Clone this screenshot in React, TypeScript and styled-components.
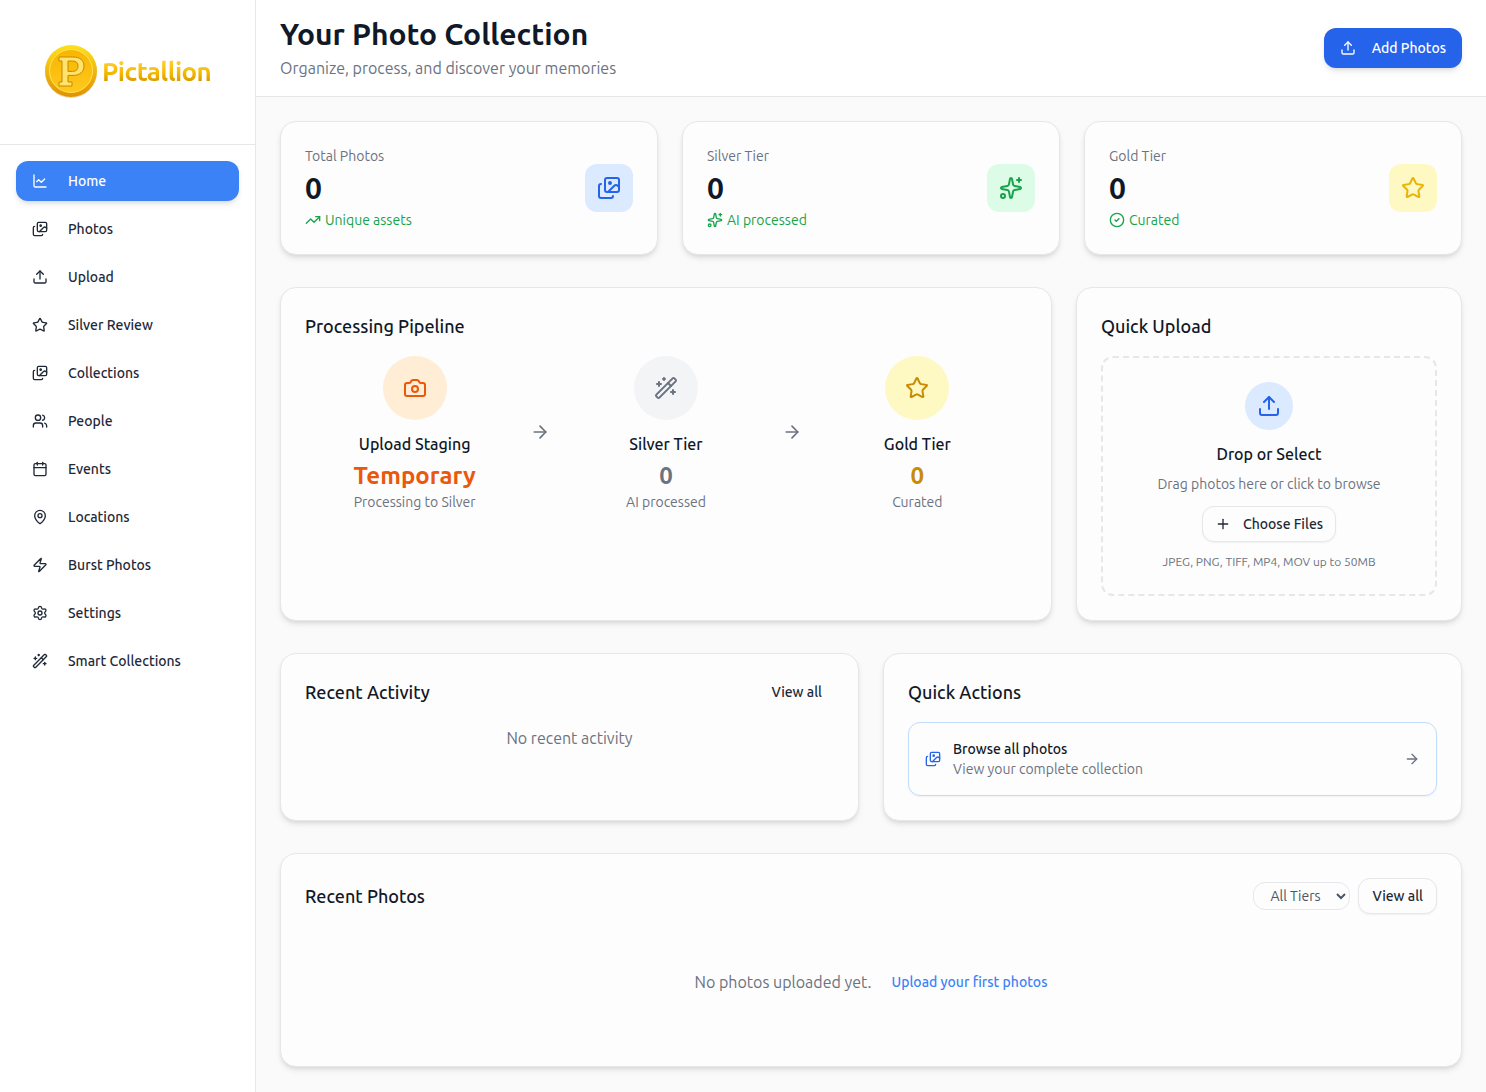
import { FC, ReactNode } from 'react';
import styled, { createGlobalStyle } from 'styled-components';
import {
  ArrowRight,
  Calendar,
  Camera,
  ChartLine,
  CircleCheck,
  Images,
  MapPin,
  Plus,
  Settings,
  Sparkles,
  Star,
  TrendingUp,
  Upload,
  Users,
  WandSparkles,
  Zap,
} from 'lucide-react';

const GlobalStyle = createGlobalStyle`
  * {
    box-sizing: border-box;
  }
  html, body {
    margin: 0;
    padding: 0;
    background: #fafafa;
    color: #111827;
    font-family: Ubuntu, "Noto Sans", sans-serif;
  }
`;

const Layout = styled.div`
  display: flex;
  height: 1092px;
  overflow: hidden;
`;

const Sidebar = styled.aside`
  width: 256px;
  flex-shrink: 0;
  background: #fff;
  border-right: 1px solid #e5e7eb;
`;

const LogoBox = styled.div`
  height: 145px;
  display: flex;
  align-items: center;
  padding: 0 0 2px 43px;
  gap: 3px;
  border-bottom: 1px solid #e5e7eb;
`;

const LogoText = styled.span`
  font-size: 26px;
  font-weight: 700;
  letter-spacing: -0.6px;
  background: linear-gradient(180deg, #ffd84a 0%, #f5b800 55%, #c98a00 100%);
  -webkit-background-clip: text;
  background-clip: text;
  color: transparent;
`;

const Nav = styled.nav`
  display: flex;
  flex-direction: column;
  gap: 8px;
  padding: 16px;
`;

const NavItem = styled.a<{ $active?: boolean }>`
  height: 40px;
  display: flex;
  align-items: center;
  gap: 20px;
  padding: 0 16px;
  border-radius: 12px;
  font-size: 14px;
  font-weight: 500;
  color: ${(p) => (p.$active ? '#fff' : '#1f2937')};
  background: ${(p) => (p.$active ? '#3b82f6' : 'transparent')};
  box-shadow: ${(p) =>
    p.$active ? '0 4px 6px -1px rgba(0,0,0,.1), 0 2px 4px -2px rgba(0,0,0,.1)' : 'none'};
`;

const Main = styled.main`
  flex: 1;
  min-width: 0;
`;

const Header = styled.header`
  height: 97px;
  background: #fff;
  border-bottom: 1px solid #e5e7eb;
  display: flex;
  align-items: center;
  justify-content: space-between;
  padding: 0 24px;
`;

const PageTitle = styled.h1`
  margin: 0;
  font-size: 30px;
  line-height: 36px;
  font-weight: 700;
  color: #111827;
`;

const PageSubtitle = styled.p`
  margin: 4px 0 0;
  font-size: 16px;
  line-height: 24px;
  color: #6b7280;
`;

const AddButton = styled.button`
  height: 40px;
  display: flex;
  align-items: center;
  gap: 16px;
  padding: 0 16px;
  border: 0;
  border-radius: 12px;
  background: #2563eb;
  color: #fff;
  font: 500 14px Ubuntu, "Noto Sans", sans-serif;
  box-shadow: 0 4px 6px -1px rgba(0, 0, 0, 0.1), 0 2px 4px -2px rgba(0, 0, 0, 0.1);
`;

const Content = styled.div`
  padding: 24px;
  display: flex;
  flex-direction: column;
  gap: 32px;
`;

const Row = styled.div<{ $cols: string }>`
  display: grid;
  grid-template-columns: ${(p) => p.$cols};
  gap: 24px;
`;

const Card = styled.section<{ $height: number }>`
  height: ${(p) => p.$height}px;
  padding: 24px;
  background: #fdfdfd;
  border: 1px solid #e5e7eb;
  border-radius: 16px;
  box-shadow: 0 4px 6px -1px rgba(0, 0, 0, 0.1), 0 2px 4px -2px rgba(0, 0, 0, 0.1);
`;

const StatCard = styled(Card)`
  display: flex;
  align-items: center;
  justify-content: space-between;
`;

const StatLabel = styled.div`
  font-size: 14px;
  line-height: 20px;
  color: #6b7280;
`;

const StatValue = styled.div`
  margin-top: 4px;
  font-size: 30px;
  line-height: 36px;
  font-weight: 700;
  color: #111827;
`;

const StatNote = styled.div`
  margin-top: 4px;
  display: flex;
  align-items: center;
  gap: 4px;
  font-size: 14px;
  line-height: 20px;
  color: #16a34a;
`;

const StatIcon = styled.div<{ $bg: string; $color: string }>`
  width: 48px;
  height: 48px;
  border-radius: 12px;
  display: flex;
  align-items: center;
  justify-content: center;
  background: ${(p) => p.$bg};
  color: ${(p) => p.$color};
`;

const CardTitle = styled.h2`
  margin: 0;
  font-size: 18px;
  line-height: 28px;
  font-weight: 500;
  color: #111827;
`;

const Pipeline = styled.div`
  margin-top: 16px;
  display: grid;
  grid-template-columns: 1fr 1fr 1fr;
  column-gap: 32px;
  padding: 0;
`;

const Stage = styled.div`
  position: relative;
  display: flex;
  flex-direction: column;
  align-items: center;
`;

const StageCircle = styled.div<{ $bg: string; $color: string }>`
  width: 64px;
  height: 64px;
  border-radius: 50%;
  display: flex;
  align-items: center;
  justify-content: center;
  background: ${(p) => p.$bg};
  color: ${(p) => p.$color};
`;

const StageName = styled.div`
  margin-top: 12px;
  font-size: 16px;
  line-height: 24px;
  font-weight: 500;
  color: #111827;
`;

const StageValue = styled.div<{ $color: string }>`
  margin-top: 4px;
  font-size: 24px;
  line-height: 32px;
  font-weight: 700;
  color: ${(p) => p.$color};
`;

const StageNote = styled.div`
  font-size: 14px;
  line-height: 20px;
  color: #6b7280;
`;

const StageArrow = styled.div`
  position: absolute;
  top: 66px;
  right: -32px;
  width: 32px;
  display: flex;
  justify-content: center;
  color: #6b7280;
`;

const DropZone = styled.div`
  margin-top: 16px;
  height: 240px;
  border: 2px dashed #e5e7eb;
  border-radius: 12px;
  display: flex;
  flex-direction: column;
  align-items: center;
  padding-top: 24px;
`;

const DropCircle = styled.div`
  width: 48px;
  height: 48px;
  border-radius: 50%;
  display: flex;
  align-items: center;
  justify-content: center;
  background: #dbeafe;
  color: #2563eb;
`;

const DropTitle = styled.div`
  margin-top: 12px;
  font-size: 16px;
  line-height: 24px;
  font-weight: 500;
  color: #111827;
`;

const DropHint = styled.div`
  margin-top: 8px;
  font-size: 14px;
  line-height: 20px;
  color: #6b7280;
`;

const OutlineButton = styled.button`
  display: flex;
  align-items: center;
  height: 36px;
  border: 1px solid #e5e7eb;
  border-radius: 12px;
  background: #fdfdfd;
  color: #1f2937;
  font: 500 14px Ubuntu, "Noto Sans", sans-serif;
  box-shadow: 0 1px 2px rgba(0, 0, 0, 0.05);
`;

const ChooseButton = styled(OutlineButton)`
  margin-top: 12px;
  gap: 12px;
  padding: 0 12px;
`;

const DropFormats = styled.div`
  margin-top: 12px;
  font-size: 12px;
  line-height: 16px;
  color: #6b7280;
`;

const CardHead = styled.div`
  display: flex;
  align-items: center;
  justify-content: space-between;
`;

const GhostLink = styled.span`
  padding: 0 12px;
  font-size: 14px;
  font-weight: 500;
  color: #1f2937;
`;

const EmptyNote = styled.div`
  margin-top: 20px;
  text-align: center;
  font-size: 16px;
  line-height: 24px;
  color: #6b7280;
`;

const ActionRow = styled.div`
  margin-top: 16px;
  height: 74px;
  display: flex;
  align-items: center;
  gap: 12px;
  padding: 0 16px;
  border: 1px solid #bfdbfe;
  border-radius: 12px;
  box-shadow: 0 1px 2px rgba(0, 0, 0, 0.05);
`;

const ActionText = styled.div`
  flex: 1;
`;

const ActionTitle = styled.div`
  font-size: 14px;
  line-height: 20px;
  font-weight: 500;
  color: #111827;
`;

const ActionNote = styled.div`
  font-size: 14px;
  line-height: 20px;
  color: #6b7280;
`;

const HeadControls = styled.div`
  display: flex;
  align-items: center;
  gap: 8px;
`;

const TierSelect = styled.select`
  height: 28px;
  padding: 0 0 0 12px;
  width: 97px;
  border: 1px solid #e5e7eb;
  border-radius: 12px;
  background: #fdfdfd;
  color: #4b5563;
  font: 14px Ubuntu, "Noto Sans", sans-serif;
`;

const ViewAllButton = styled(OutlineButton)`
  padding: 0 13px;
`;

const EmptyPhotos = styled.div`
  height: 120px;
  margin-top: 8px;
  display: flex;
  align-items: center;
  justify-content: center;
  gap: 20px;
  font-size: 16px;
  color: #6b7280;
`;

const UploadLink = styled.a`
  font-size: 14px;
  font-weight: 500;
  color: #3b82f6;
`;

const CoinLogo: FC = () => (
  <svg width="56" height="56" viewBox="0 0 56 56">
    <defs>
      <linearGradient id="coinEdge" x1="0" y1="0" x2="0" y2="1">
        <stop offset="0" stopColor="#ffe01a" />
        <stop offset="1" stopColor="#e09200" />
      </linearGradient>
      <linearGradient id="coinFace" x1="0" y1="0" x2="0" y2="1">
        <stop offset="0" stopColor="#f7b500" />
        <stop offset="1" stopColor="#ffc91f" />
      </linearGradient>
    </defs>
    <circle cx="28" cy="29" r="26" fill="#a8700a" opacity="0.25" />
    <circle cx="28" cy="28" r="26" fill="url(#coinEdge)" />
    <circle cx="28" cy="28" r="21.5" fill="url(#coinFace)" stroke="#ffe25a" strokeWidth="1" />
    <path
      d="M16 14h14c7 0 11 3.4 11 9s-4 9.400-11 9.400h-5v6.600h4v4H16v-4h3V18h-3z M25 18v10.400h4.500c3.800 0 5.500-1.900 5.500-5.200S33.300 18 29.500 18z"
      fill="#ffe36a"
      fillRule="evenodd"
      stroke="#c98500"
      strokeWidth="1"
    />
  </svg>
);

const navItems: { label: string; icon: ReactNode; active?: boolean }[] = [
  { label: 'Home', icon: <ChartLine size={16} />, active: true },
  { label: 'Photos', icon: <Images size={16} /> },
  { label: 'Upload', icon: <Upload size={16} /> },
  { label: 'Silver Review', icon: <Star size={16} /> },
  { label: 'Collections', icon: <Images size={16} /> },
  { label: 'People', icon: <Users size={16} /> },
  { label: 'Events', icon: <Calendar size={16} /> },
  { label: 'Locations', icon: <MapPin size={16} /> },
  { label: 'Burst Photos', icon: <Zap size={16} /> },
  { label: 'Settings', icon: <Settings size={16} /> },
  { label: 'Smart Collections', icon: <WandSparkles size={16} /> },
];

const stats = [
  {
    label: 'Total Photos',
    note: 'Unique assets',
    noteIcon: <TrendingUp size={16} />,
    icon: <Images size={24} />,
    bg: '#dbeafe',
    color: '#2563eb',
  },
  {
    label: 'Silver Tier',
    note: 'AI processed',
    noteIcon: <Sparkles size={16} />,
    icon: <Sparkles size={24} />,
    bg: '#dcfce7',
    color: '#16a34a',
  },
  {
    label: 'Gold Tier',
    note: 'Curated',
    noteIcon: <CircleCheck size={16} />,
    icon: <Star size={24} />,
    bg: '#fef9c3',
    color: '#eab308',
  },
];

const stages = [
  {
    name: 'Upload Staging',
    value: 'Temporary',
    note: 'Processing to Silver',
    icon: <Camera size={24} />,
    bg: '#ffedd5',
    color: '#ea580c',
    valueColor: '#ea580c',
  },
  {
    name: 'Silver Tier',
    value: '0',
    note: 'AI processed',
    icon: <WandSparkles size={24} />,
    bg: '#f3f4f6',
    color: '#6b7280',
    valueColor: '#6b7280',
  },
  {
    name: 'Gold Tier',
    value: '0',
    note: 'Curated',
    icon: <Star size={24} />,
    bg: '#fef9c3',
    color: '#ca8a04',
    valueColor: '#ca8a04',
  },
];

const App: FC = () => (
  <Layout>
    <GlobalStyle />
    <Sidebar>
      <LogoBox>
        <CoinLogo />
        <LogoText>Pictallion</LogoText>
      </LogoBox>
      <Nav>
        {navItems.map((item) => (
          <NavItem key={item.label} $active={item.active}>
            {item.icon}
            {item.label}
          </NavItem>
        ))}
      </Nav>
    </Sidebar>
    <Main>
      <Header>
        <div>
          <PageTitle>Your Photo Collection</PageTitle>
          <PageSubtitle>Organize, process, and discover your memories</PageSubtitle>
        </div>
        <AddButton>
          <Upload size={16} />
          Add Photos
        </AddButton>
      </Header>
      <Content>
        <Row $cols="1fr 1fr 1fr">
          {stats.map((stat) => (
            <StatCard key={stat.label} $height={134}>
              <div>
                <StatLabel>{stat.label}</StatLabel>
                <StatValue>0</StatValue>
                <StatNote>
                  {stat.noteIcon}
                  {stat.note}
                </StatNote>
              </div>
              <StatIcon $bg={stat.bg} $color={stat.color}>
                {stat.icon}
              </StatIcon>
            </StatCard>
          ))}
        </Row>
        <Row $cols="2fr 1fr">
          <Card $height={334}>
            <CardTitle>Processing Pipeline</CardTitle>
            <Pipeline>
              {stages.map((stage, i) => (
                <Stage key={stage.name}>
                  <StageCircle $bg={stage.bg} $color={stage.color}>
                    {stage.icon}
                  </StageCircle>
                  <StageName>{stage.name}</StageName>
                  <StageValue $color={stage.valueColor}>{stage.value}</StageValue>
                  <StageNote>{stage.note}</StageNote>
                  {i < 2 && (
                    <StageArrow>
                      <ArrowRight size={20} />
                    </StageArrow>
                  )}
                </Stage>
              ))}
            </Pipeline>
          </Card>
          <Card $height={334}>
            <CardTitle>Quick Upload</CardTitle>
            <DropZone>
              <DropCircle>
                <Upload size={24} />
              </DropCircle>
              <DropTitle>Drop or Select</DropTitle>
              <DropHint>Drag photos here or click to browse</DropHint>
              <ChooseButton>
                <Plus size={16} />
                Choose Files
              </ChooseButton>
              <DropFormats>JPEG, PNG, TIFF, MP4, MOV up to 50MB</DropFormats>
            </DropZone>
          </Card>
        </Row>
        <Row $cols="1fr 1fr">
          <Card $height={168}>
            <CardHead>
              <CardTitle>Recent Activity</CardTitle>
              <GhostLink>View all</GhostLink>
            </CardHead>
            <EmptyNote>No recent activity</EmptyNote>
          </Card>
          <Card $height={168}>
            <CardTitle>Quick Actions</CardTitle>
            <ActionRow>
              <Images size={16} color="#2563eb" />
              <ActionText>
                <ActionTitle>Browse all photos</ActionTitle>
                <ActionNote>View your complete collection</ActionNote>
              </ActionText>
              <ArrowRight size={16} color="#6b7280" />
            </ActionRow>
          </Card>
        </Row>
        <Card $height={214}>
          <CardHead>
            <CardTitle>Recent Photos</CardTitle>
            <HeadControls>
              <TierSelect defaultValue="all">
                <option value="all">All Tiers</option>
              </TierSelect>
              <ViewAllButton>View all</ViewAllButton>
            </HeadControls>
          </CardHead>
          <EmptyPhotos>
            No photos uploaded yet.
            <UploadLink>Upload your first photos</UploadLink>
          </EmptyPhotos>
        </Card>
      </Content>
    </Main>
  </Layout>
);

export default App;
